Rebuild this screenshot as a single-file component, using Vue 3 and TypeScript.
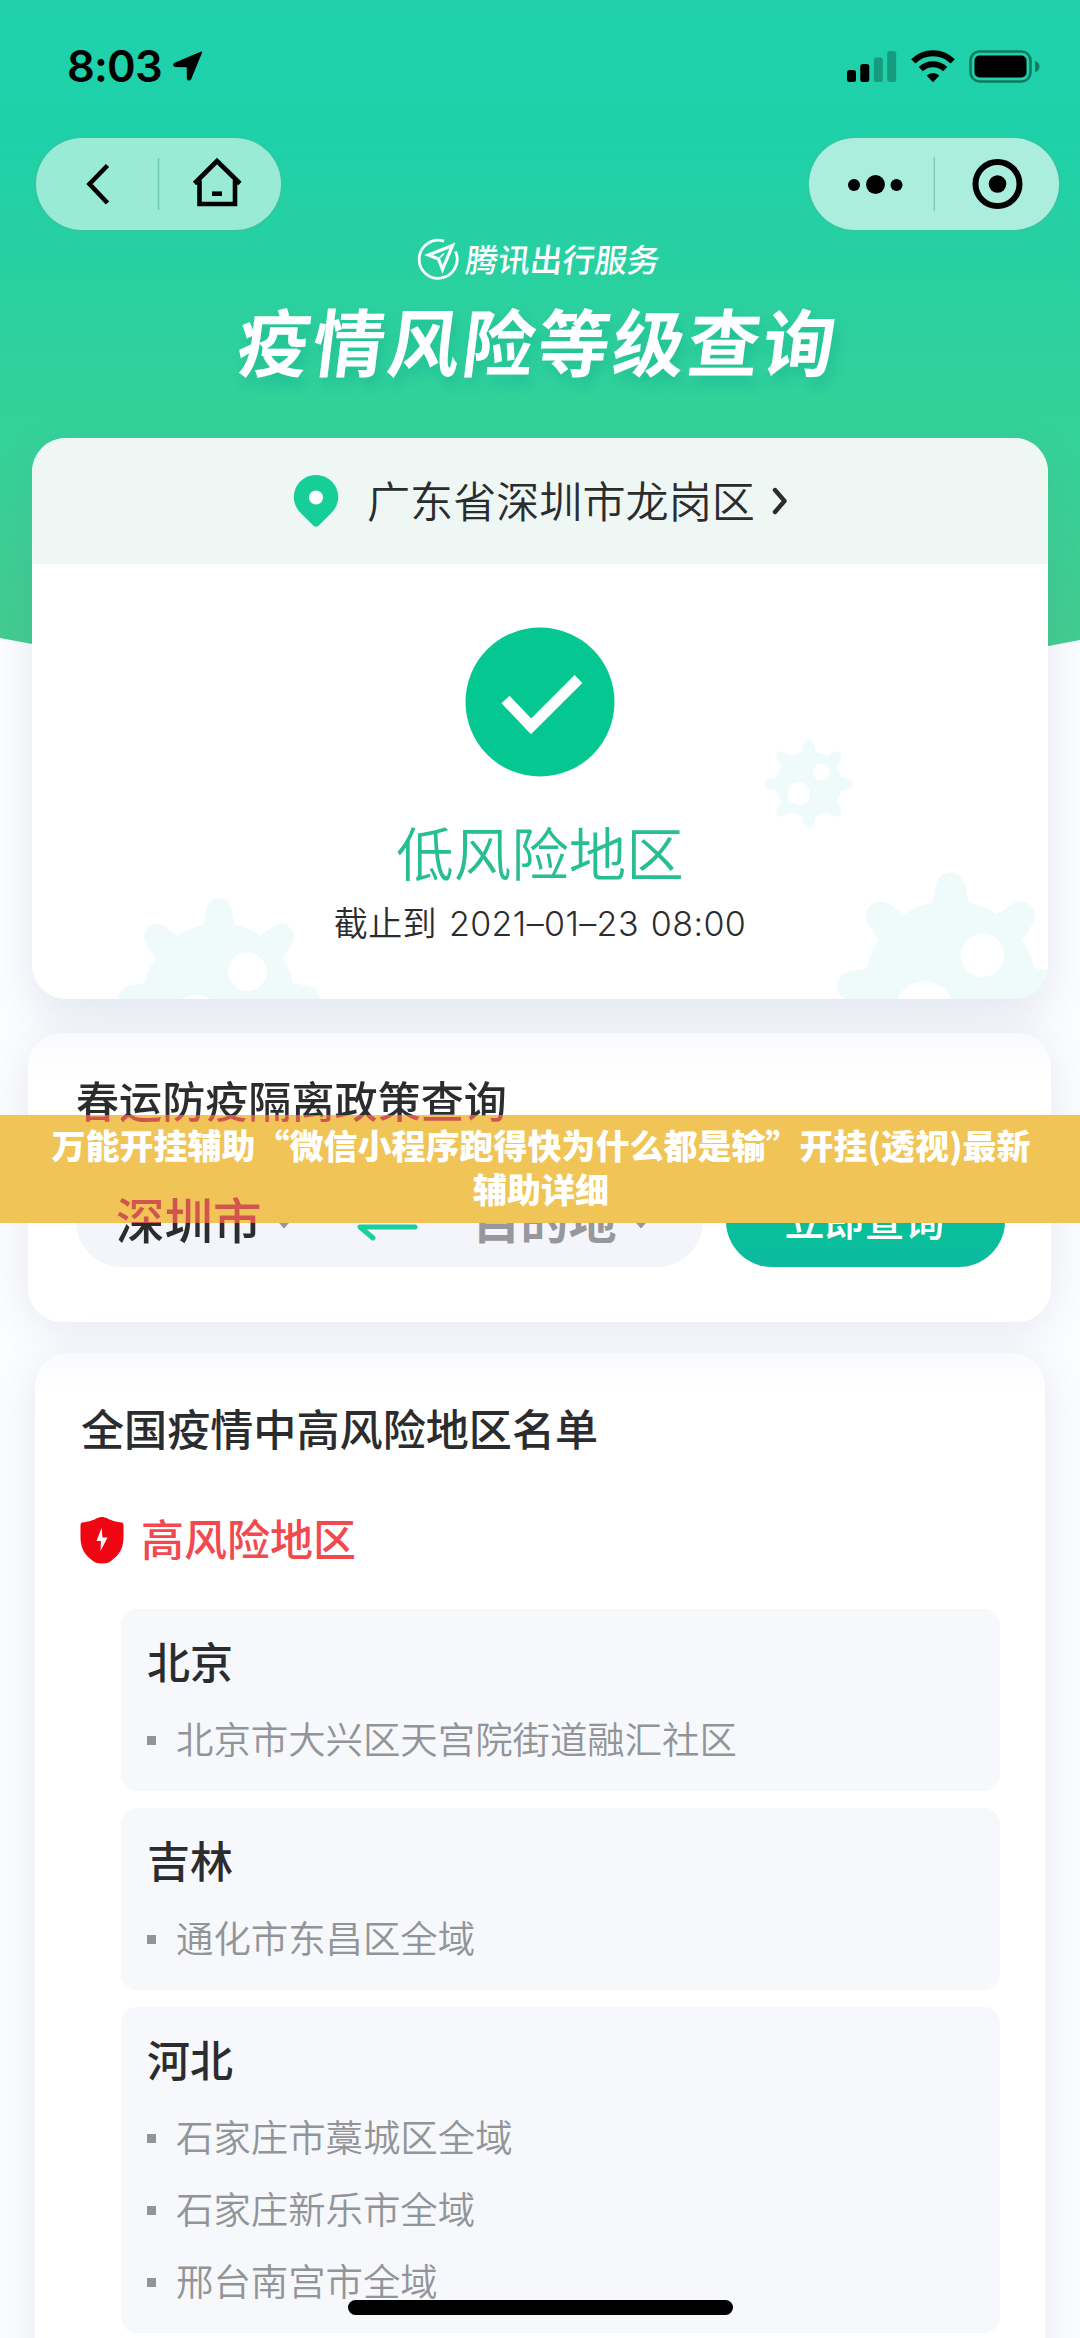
<script setup lang="ts">
interface Province {
  name: string
  areas: string[]
}

const provinces: Province[] = [
  { name: '北京', areas: ['北京市大兴区天宫院街道融汇社区'] },
  { name: '吉林', areas: ['通化市东昌区全域'] },
  { name: '河北', areas: ['石家庄市藁城区全域', '石家庄新乐市全域', '邢台南宫市全域'] },
]

const bannerLines: string[] = [
  '万能开挂辅助“微信小程序跑得快为什么都是输”开挂(透视)最新',
  '辅助详细',
]

interface Germ {
  x: number
  y: number
  r: number
}

// Decorative virus shapes, in the coordinates of the risk card body
const germs: Germ[] = [
  { x: 777, y: 220, r: 44 },
  { x: 187, y: 435, r: 101 },
  { x: 918.5, y: 422, r: 114 },
]
const spokes: number[] = [0, 45, 90, 135, 180, 225, 270, 315]
</script>

<template>
  <div class="screen" lang="zh-CN">
    <svg class="sky" viewBox="0 0 1080 700" width="1080" height="700">
      <defs>
        <linearGradient id="sky" x1="0" y1="0" x2="0" y2="700" gradientUnits="userSpaceOnUse">
          <stop offset="0" stop-color="#20d1ac" />
          <stop offset="0.2" stop-color="#1fd1a9" />
          <stop offset="0.4" stop-color="#29d0a0" />
          <stop offset="0.62" stop-color="#34d299" />
          <stop offset="0.92" stop-color="#42cc8f" />
        </linearGradient>
      </defs>
      <path d="M0 0H1080V640Q540 746 0 638Z" fill="url(#sky)" />
    </svg>

    <header class="status">
      <div class="clock">
        <span class="time">8:03</span>
        <svg width="32" height="32" viewBox="0 0 32 32">
          <path d="M29.5 2.2 18.6 28.8Q17 31 15.6 28.6L15.4 16.6 3 16.2Q0.6 15 2.8 13.4Z" fill="#000" stroke="#000" stroke-width="1.4" stroke-linejoin="round" />
        </svg>
      </div>
      <div class="signals">
        <svg width="50" height="34" viewBox="0 0 50 34">
          <rect x="0" y="20" width="9" height="12" rx="2.5" />
          <rect x="13.3" y="14" width="9" height="18" rx="2.5" />
          <rect x="26.8" y="7.5" width="9" height="24.5" rx="2.5" opacity="0.26" />
          <rect x="40.2" y="1" width="9" height="31" rx="2.5" opacity="0.26" />
        </svg>
        <svg width="44" height="34" viewBox="0 0 44 34">
          <g fill="none" stroke="#000" stroke-width="6">
            <path d="M2.3 11.4A28 28 0 0 1 41.7 11.4" />
            <path d="M9.8 19.2A17.3 17.3 0 0 1 34.2 19.2" />
          </g>
          <path d="M15.6 25.6A9 9 0 0 1 28.4 25.6L22 32.2Z" />
        </svg>
        <svg width="72" height="34" viewBox="0 0 72 34">
          <rect x="1.5" y="1.5" width="60" height="30" rx="9" fill="none" stroke="#000" stroke-width="2.6" opacity="0.42" />
          <rect x="5.5" y="5.5" width="52" height="22" rx="5" />
          <path d="M66 11Q70.5 12.5 70.5 16.5T66 22.5Z" opacity="0.42" />
        </svg>
      </div>
    </header>

    <nav class="nav">
      <div class="capsule left">
        <svg width="245" height="92" viewBox="0 0 245 92">
          <g fill="none" stroke="#000" stroke-width="4.6">
            <path d="M71.5 27.5 53.5 46 71.5 65" />
            <path d="M158.500 45.500 181 23 204 45.500M163.500 42.500V66H199V42.500" />
            <path d="M176 55.700H186" />
          </g>
          <path d="M122.500 20V72" stroke="#6fcdb0" stroke-width="1.6" />
        </svg>
      </div>
      <div class="capsule right">
        <svg width="250" height="92" viewBox="0 0 250 92">
          <circle cx="45" cy="47" r="6" />
          <circle cx="66.5" cy="46.5" r="9.4" />
          <circle cx="87.5" cy="47" r="6" />
          <path d="M125.300 19V73" stroke="#86c7b5" stroke-width="1.4" />
          <circle cx="188.5" cy="46" r="22" fill="none" stroke="#000" stroke-width="6" />
          <circle cx="188.5" cy="46" r="8.8" />
        </svg>
      </div>
    </nav>

    <div class="brand">
      <svg width="42" height="42" viewBox="0 0 42 42" fill="none" stroke="#fff">
        <path d="M27 3.2A19 19 0 1 0 38.5 13.5" stroke-width="2.8" />
        <path d="M35.5 7.5 11.5 17 21.5 21 25.5 31.5Z" stroke-width="3.2" stroke-linejoin="miter" />
        <path d="M21.5 21 27 15.5" stroke-width="1.6" />
      </svg>
      <span class="brand-name">腾讯出行服务</span>
    </div>
    <h1 class="title">疫情风险等级查询</h1>

    <section class="card risk">
      <div class="place">
        <svg width="46" height="54" viewBox="0 0 46 54">
          <path d="M23 1A22 22 0 0 1 38.500 38.800L25.500 51.800Q23 53.800 20.500 51.800L7.500 38.800A22 22 0 0 1 23 1Z" fill="#16ce97" />
          <circle cx="23" cy="23.5" r="7" fill="#fff" />
        </svg>
        <span class="place-name">广东省深圳市龙岗区</span>
        <svg width="16" height="28" viewBox="0 0 16 28">
          <path d="M3 3 12.5 14 3 25" fill="none" stroke="#2b2c2e" stroke-width="4.4" stroke-linejoin="round" stroke-linecap="round" />
        </svg>
      </div>
      <div class="result">
        <svg class="germs" width="1016" height="435" viewBox="0 0 1016 435">
          <g v-for="g in germs" :key="g.x" :transform="`translate(${g.x} ${g.y}) scale(${g.r / 100})`">
            <circle r="75" fill="#effbfa" />
            <path
              v-for="a in spokes"
              :key="a"
              :transform="`rotate(${a})`"
              d="M-17 -66 L-13 -87 C-11 -104 11 -104 13 -87 L17 -66Z"
              fill="#effbfa"
            />
            <circle cx="28" cy="-27" r="19" fill="#fff" />
            <circle cx="-23" cy="22" r="26" fill="#fff" />
          </g>
        </svg>
        <svg class="check" width="150" height="150" viewBox="0 0 150 150">
          <circle cx="75" cy="75" r="74.5" fill="#04c791" />
          <path d="M40.5 72.5 66 99.3 113.5 52" fill="none" stroke="#fff" stroke-width="11" />
        </svg>
        <p class="level">低风险地区</p>
        <p class="until">截止到 2021–01–23 08:00</p>
      </div>
    </section>

    <section class="card policy">
      <h2 class="heading policy-heading">春运防疫隔离政策查询</h2>
      <div class="route">
        <div class="cities">
          <span class="from">深圳市</span>
          <svg class="caret" width="16" height="10" viewBox="0 0 16 10"><path d="M1 1H15L8 9Z" fill="#98989c" stroke="#98989c" /></svg>
          <svg class="swap" width="62" height="40" viewBox="0 0 62 40" fill="none" stroke="#19cfa0" stroke-width="5" stroke-linecap="round" stroke-linejoin="round">
            <path d="M3 12H59L43 2" />
            <path d="M59 26H4L17 37" />
          </svg>
          <span class="to">目的地</span>
          <svg class="caret" width="16" height="10" viewBox="0 0 16 10"><path d="M1 1H15L8 9Z" fill="#98989c" stroke="#98989c" /></svg>
        </div>
        <button class="go" type="button">立即查询</button>
      </div>
    </section>

    <section class="card list">
      <h2 class="heading">全国疫情中高风险地区名单</h2>
      <h3 class="danger">
        <svg width="44" height="48" viewBox="0 0 44 48">
          <path d="M22 1C28 1 28 5 42 6.500Q43.500 7 43.500 9V22C43.500 35 36 42 28.500 46.500Q26 47.500 22 47.500T15.500 46.500C8 42 0.500 35 0.500 22V9Q0.500 7 2 6.500C16 5 16 1 22 1Z" fill="#f00512" />
          <path d="M21.500 12 16.500 25H21L20.500 35 27.500 21.500H22.500Z" fill="#fff" />
        </svg>
        <span>高风险地区</span>
      </h3>
      <div class="provinces">
        <article v-for="p in provinces" :key="p.name" class="province">
          <h4>{{ p.name }}</h4>
          <ul>
            <li v-for="a in p.areas" :key="a"><span>{{ a }}</span></li>
          </ul>
        </article>
      </div>
    </section>

    <div class="banner">
      <div v-for="line in bannerLines" :key="line" class="banner-line">{{ line }}</div>
    </div>
    <div class="home-bar"></div>
  </div>
</template>

<style>
body {
  margin: 0;
}
</style>

<style scoped>
.screen {
  position: relative;
  width: 1080px;
  height: 2338px;
  overflow: hidden;
  background: #fcfdff;
  font-family: 'Noto Sans CJK SC', 'Noto Sans CJK JP', sans-serif;
  color: #2b2c2e;
}

h1, h2, h3, h4, p, ul {
  margin: 0;
  padding: 0;
}

svg {
  display: block;
  flex: none;
}

.sky {
  position: absolute;
  left: 0;
  top: 0;
}

.status {
  position: relative;
  display: flex;
  justify-content: space-between;
  height: 138px;
  padding: 0 39px 0 67px;
  box-sizing: border-box;
}

.clock {
  display: flex;
  gap: 9px;
  padding-top: 50px;
}

.time {
  width: 96px;
  height: 33px;
  font: 600 43.5px/33px Inter, sans-serif;
  letter-spacing: -0.8px;
  color: #000;
}

.signals {
  display: flex;
  padding-top: 50px;
}

.signals svg:nth-child(2) {
  margin: 0 14px 0 14px;
}

.nav {
  position: relative;
  display: flex;
  justify-content: space-between;
  padding: 0 21px 0 36px;
}

.capsule {
  height: 92px;
  border-radius: 46px;
  box-shadow: 0 0 2px 1px rgba(90, 180, 150, 0.5);
}

.left {
  background: #99ebd5;
}

.right {
  background: #abeedd;
}

.brand {
  position: relative;
  display: flex;
  gap: 7px;
  justify-content: center;
  align-items: center;
  height: 42px;
  margin-top: 8px;
  padding-right: 4px;
}

.brand-name {
  padding-bottom: 3px;
  font-size: 32.3px;
  line-height: 42px;
  font-weight: 500;
  color: #fff;
  transform: skewX(-7deg);
}

.title {
  position: relative;
  height: 90px;
  margin-top: 14px;
  padding-right: 2px;
  font-size: 72px;
  line-height: 90px;
  letter-spacing: 3px;
  font-weight: 700;
  text-align: center;
  color: #fff;
  text-shadow: 5px 9px 12px rgba(20, 170, 140, 0.45);
  transform: skewX(-7deg) scaleY(1.02);
}

.card {
  position: relative;
  background: #fff;
  border-radius: 34px;
  box-shadow: 0 6px 44px rgba(100, 112, 160, 0.15);
}

.risk {
  width: 1016px;
  height: 561px;
  margin: 54px auto 0;
  overflow: hidden;
  box-shadow: 0 18px 44px rgba(100, 112, 160, 0.15);
}

.place {
  display: flex;
  align-items: center;
  height: 126px;
  padding-left: 261px;
  box-sizing: border-box;
  background: #eff7f5;
}

.place-name {
  margin: 0 17px 0 28px;
  padding-bottom: 5px;
  font-size: 43.1px;
  line-height: 60px;
  font-weight: 350;
}

.result {
  position: relative;
  display: flex;
  flex-direction: column;
  align-items: center;
  height: 435px;
}

.germs {
  position: absolute;
  left: 0;
  top: 0;
}

.check {
  position: relative;
  margin-top: 63px;
}

.level {
  position: relative;
  margin-top: 34px;
  font-size: 57.5px;
  line-height: 80px;
  font-weight: 350;
  color: #27be92;
}

.until {
  position: relative;
  margin-top: 11px;
  font: 350 34px/44px Inter, 'Noto Sans CJK SC', sans-serif;
  letter-spacing: 0.4px;
  word-spacing: 2px;
}

.policy {
  width: 1023px;
  height: 289px;
  margin: 34px 0 0 28px;
  padding: 36px 46px 0 48px;
  box-sizing: border-box;
  background: linear-gradient(#f9fafd, #fff 44px);
}

.heading {
  font-size: 43.1px;
  line-height: 60px;
  font-weight: 500;
}

/* Dark text turns red where the banner covers it */
.policy-heading,
.from {
  position: relative;
  z-index: 3;
  width: max-content;
  color: transparent;
  background-clip: text;
  -webkit-background-clip: text;
}

.policy-heading {
  background-image: linear-gradient(#2b2c2e 46px, #d2544e 46px);
}

.from {
  margin-bottom: 6px;
  font-size: 48.5px;
  line-height: 70px;
  font-weight: 500;
  background-image: linear-gradient(#d2544e 40px, #2b2c2e 40px);
}

.route {
  display: flex;
  justify-content: space-between;
  margin-top: 46px;
}

.cities {
  display: flex;
  align-items: center;
  width: 627px;
  height: 92px;
  padding-left: 40px;
  box-sizing: border-box;
  border-radius: 46px;
  background: #f4f5fa;
}

.caret {
  margin-top: 6px;
}

.from + .caret {
  margin-left: 14px;
}

.swap {
  margin: 0 55px 0 64px;
}

.to {
  margin: 0 16px 6px 0;
  font-size: 48px;
  line-height: 70px;
  font-weight: 700;
  color: #98989c;
}

.go {
  width: 279px;
  height: 92px;
  padding: 0 2px 4px 0;
  border: 0;
  border-radius: 46px;
  background: linear-gradient(#00c792, #0dba9f);
  font: 500 40px/84px 'Noto Sans CJK SC', sans-serif;
  color: #fff;
}

.list {
  width: 1010px;
  height: 1100px;
  margin: 31px 0 0 35px;
  padding: 44px 45px 0 46px;
  box-sizing: border-box;
  background: linear-gradient(#f9fafd, #fff 40px);
}

.danger {
  display: flex;
  align-items: center;
  gap: 17px;
  height: 60px;
  margin-top: 53px;
  font-size: 43px;
  line-height: 60px;
  font-weight: 500;
  color: #f2494f;
}

.danger svg {
  margin-left: -1px;
}

.danger span {
  padding-bottom: 6px;
}

.provinces {
  display: flex;
  flex-direction: column;
  gap: 17px;
  margin: 39px 0 0 40px;
}

.province {
  padding: 21px 26px 15px;
  border-radius: 16px;
  background: #f6f8fc;
}

.province h4 {
  font-size: 43px;
  line-height: 60px;
  font-weight: 500;
}

.province ul {
  margin-top: 14px;
  list-style: none;
}

.province li {
  display: flex;
  align-items: center;
  height: 72px;
  font-size: 37.4px;
  font-weight: 350;
  color: #929497;
}

.province li::before {
  content: '';
  width: 9px;
  height: 9px;
  margin-right: 20px;
  background: #929497;
}

.province li span {
  padding-bottom: 4px;
}

.banner {
  position: absolute;
  z-index: 2;
  left: 0;
  top: 1115px;
  width: 1080px;
  height: 108px;
  padding: 8px 0 0 2px;
  box-sizing: border-box;
  background: #f0c457;
}

.banner-line {
  height: 44px;
  font-size: 34px;
  line-height: 44px;
  font-weight: 900;
  text-align: center;
  white-space: nowrap;
  color: #fff;
}

.home-bar {
  position: absolute;
  z-index: 4;
  left: 348px;
  top: 2300px;
  width: 385px;
  height: 15px;
  border-radius: 8px;
  background: #000;
}
</style>
